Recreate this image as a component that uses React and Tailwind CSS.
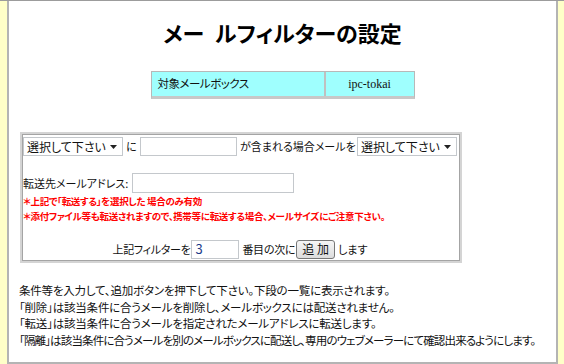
import React from 'react';

const jp = "font-['Noto_Sans_CJK_JP','Noto_Sans',sans-serif] [font-feature-settings:'palt']";

function FakeSelect() {
    return (
        <div className="shrink-0 flex items-center justify-between w-[100px] h-[19px] border border-[#c4c8cc] bg-white pl-[3px] pr-[5px] text-[12px] leading-none text-[#111] whitespace-nowrap">
            <span>選択して下さい</span>
            <svg width="7" height="4" viewBox="0 0 7 4"><path d="M0 0h7L3.5 4z" fill="#222" /></svg>
        </div>
    );
}

export default function App() {
    return (
        <div className={`w-[564px] h-[364px] flex bg-[#ffffc8] border-t border-[#9c9c9c] ${jp}`}>
            <div className="w-[7px] shrink-0" />
            <div className="flex-1 min-w-0 overflow-hidden bg-white border-l-2 border-r-2 border-b-2 border-[#b4b4b4] pl-[10px] text-[11px] text-[#111] whitespace-nowrap">
                {/* タイトル */}
                <h1 className="pt-[16px] h-[46px] leading-[30px] text-center text-[22px] font-bold text-black pr-[10px]">
                    メー<span className="inline-block w-[11px]" />ルフィルターの設定
                </h1>

                {/* 対象メールボックス */}
                <div className="flex justify-center mt-[24px] pr-[10px]">
                    <div className="flex w-[264px] h-[28px] border border-[#b8b8b8] border-b-[3px] border-b-[#c8c8c8] bg-[#9ffffe]">
                        <div className="w-[174px] flex items-center pl-[6px] text-[11.5px] tracking-[-0.5px] border-r-2 border-[#c0c0c0]">対象メールボックス</div>
                        <div className="flex-1 flex items-center justify-center text-[12px] font-['Liberation_Serif',serif]">ipc-tokai</div>
                    </div>
                </div>

                {/* フィルター入力 */}
                <div className="ml-[1px] mt-[33px] w-[442px] border-2 border-[#d4d4d4]">
                    <div className="border border-[#a4a4a4] h-[127px] flex flex-col">
                        <div className="flex items-center mt-[2px] h-[19px]">
                            <FakeSelect />
                            <span className="ml-[3px] w-[14px]">に</span>
                            <div className="shrink-0 w-[97px] h-[19px] border border-[#c4c8cc] bg-white" />
                            <span className="ml-[3px] w-[117px] shrink-0">が含まれる場合メールを</span>
                            <FakeSelect />
                        </div>

                        <div className="flex items-center mt-[17px] h-[20px]">
                            <span className="w-[109px] shrink-0">転送先メールアドレス:</span>
                            <div className="w-[162px] h-[20px] border border-[#c4c8cc] bg-white" />
                        </div>

                        <div className="mt-[1px] text-[9.5px] leading-[15px] font-bold text-[#ff0000] tracking-[-0.3px]">
                            <p>＊上記で「転送する」を選択した 場合のみ有効</p>
                            <p>＊添付ファイル等も転送されますので、携帯等に転送する場合、メールサイズにご注意下さい。</p>
                        </div>

                        <div className="flex items-center justify-center mt-[15px] h-[20px] pr-[2px]">
                            <span className="tracking-[-0.3px]">上記フィルターを</span>
                            <div className="ml-[1px] w-[48px] h-[19px] border border-[#c4c8cc] bg-white flex items-center pl-[3px] text-[13px] text-[#1a3a8a]">3</div>
                            <span className="ml-[3px] tracking-[-0.3px]">番目の次に</span>
                            <button className="ml-[1px] w-[39px] h-[19px] border border-[#777] rounded-[3px] bg-gradient-to-b from-[#f6f6f6] to-[#dcdcdc] text-[12px] leading-none">追 加</button>
                            <span className="ml-[3px]">します</span>
                        </div>
                    </div>
                </div>

                {/* 説明 */}
                <div className="mt-[19px] text-[11.5px] leading-[16.5px] tracking-[-0.2px]">
                    <p>条件等を入力して、追加ボタンを押下して下さい。下段の一覧に表示されます。</p>
                    <p>「削除」は該当条件に合うメールを削除し、メールボックスには配送されません。</p>
                    <p>「転送」は該当条件に合うメールを指定されたメールアドレスに転送します。</p>
                    <p className="tracking-[-0.85px]">「隔離」は該当条件に合うメールを別のメールボックスに配送し、専用のウェブメーラーにて確認出来るようにします。</p>
                </div>
            </div>
            <div className="w-[6px] shrink-0" />
        </div>
    );
}
